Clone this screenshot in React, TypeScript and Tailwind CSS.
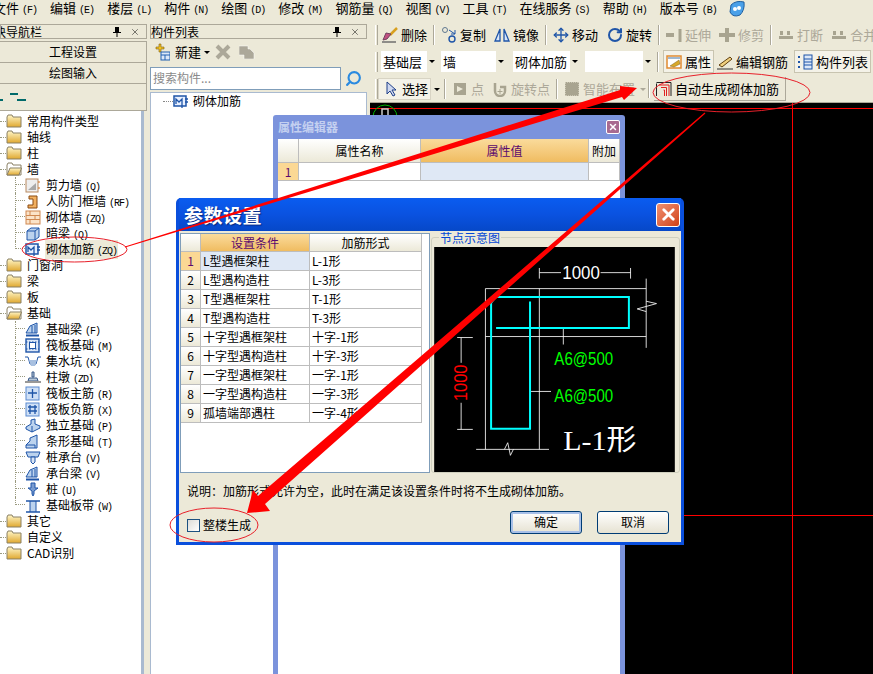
import React from "react";
import { Move, RotateCw, Search, X } from "lucide-react";

const CJK = '"Noto Sans CJK SC", "Noto Sans", sans-serif';

function Ltn({ children }: { children: React.ReactNode }) {
  return <span className="ml-[3px] font-['Liberation_Mono'] text-[10px] tracking-[-1px]">{children}</span>;
}

function MenuItem({ t, k }: { t: string; k: string }) {
  return (
    <span className="whitespace-nowrap">
      {t}
      <Ltn>({k})</Ltn>
    </span>
  );
}

function Folder({ open }: { open?: boolean }) {
  return (
    <svg width="16" height="14" viewBox="0 0 16 14" className="shrink-0">
      <defs>
        <linearGradient id="fg" x1="0" y1="0" x2="0" y2="1">
          <stop offset="0" stopColor="#fff6c8" />
          <stop offset="1" stopColor="#e0a830" />
        </linearGradient>
      </defs>
      <path d="M1 3 L2 1 H6 L7 3 H15 V13 H1 Z" fill={open ? "#fff" : "url(#fg)"} stroke="#8a8064" />
      {open && <path d="M1 13 L4 6 H15.5 L13 13 Z" fill="url(#fg)" stroke="#8a8064" />}
    </svg>
  );
}

function TreeIcon({ k }: { k: string }) {
  const blue = "#1f55a8";
  const c = { width: 16, height: 15, viewBox: "0 0 16 15", className: "shrink-0" };
  switch (k) {
    case "shear":
      return (
        <svg {...c}>
          <rect x="1" y="1" width="12" height="13" fill="#eee" stroke="#b98a60" />
          <path d="M3 12 L11 12 L11 5 Z" fill="#a9a9a9" />
          <path d="M13 4 h2 M13 10 h2" stroke="#d07020" />
        </svg>
      );
    case "door":
      return (
        <svg {...c}>
          <path d="M4 2 H12 V14 H3 V11 H8 V5 H4 Z" fill="#f2b060" stroke="#8a4a10" />
        </svg>
      );
    case "brick":
      return (
        <svg {...c}>
          <rect x="1" y="1" width="14" height="13" fill="#fbe3c8" stroke="#d08850" />
          <path d="M1 5.5 H15 M1 9.5 H15 M5 1 V5.5 M10 5.5 V9.5 M5 9.5 V14" stroke="#d08850" />
        </svg>
      );
    case "beam":
      return (
        <svg {...c}>
          <path d="M2 5 L6 2 H14 V11 L10 14 H2 Z" fill="#bcd3ee" stroke={blue} />
          <path d="M2 5 H10 V14 M10 5 L14 2" fill="none" stroke={blue} />
        </svg>
      );
    case "rebar":
      return (
        <svg {...c}>
          <rect x="1" y="2" width="12" height="10" fill="#e8f0ff" stroke={blue} strokeWidth="1.5" />
          <path d="M3 10 V5 L6 8 L9 5 V14 M12 5 H15 M12 8 H15" fill="none" stroke={blue} strokeWidth="1.3" />
        </svg>
      );
    case "footing":
      return (
        <svg {...c}>
          <path d="M1 11 L5 4 L12 1 V11 Z" fill="#bcd3ee" stroke={blue} />
          <path d="M7 4 V11 M10 3 V11" stroke={blue} />
          <path d="M1 13.5 H14" stroke={blue} strokeWidth="2" />
        </svg>
      );
    case "raft":
      return (
        <svg {...c}>
          <rect x="1" y="1" width="13" height="13" fill="#dce8f8" stroke={blue} strokeWidth="1.4" />
          <rect x="4.5" y="4.5" width="6" height="6" fill="#fff" stroke={blue} />
          <path d="M1 4 H14 M1 11 H14" stroke={blue} strokeDasharray="1.5 1.5" />
        </svg>
      );
    case "pit":
      return (
        <svg {...c}>
          <path d="M0 3 H3 L5 10 H11 L13 3 H16" fill="none" stroke={blue} />
          <path d="M4 6 H12 L10 12 H6 Z" fill="#a8c0e0" />
        </svg>
      );
    case "pier":
      return (
        <svg {...c}>
          <path d="M7 2 H9 V7 H7 Z M4 8 H12 L13 11 H3 Z" fill="#b8c8d8" stroke="#3a5a8a" />
          <rect x="0" y="11" width="16" height="2" fill="#999" />
        </svg>
      );
    case "main":
    case "neg":
      return (
        <svg {...c}>
          <rect x="1" y="1" width="13" height="13" fill="#cfe0f6" stroke="#5a8ad0" />
          <path d={k === "main" ? "M7.5 3 V12 M3 7 H12" : "M3 5 H12 M3 9 H12 M5 3 V12 M10 3 V12"} stroke={blue} strokeWidth="1.3" />
        </svg>
      );
    case "iso":
      return (
        <svg {...c}>
          <path d="M1 9 L6 6 V2 L10 1 V6 L15 8 V10 L7 14 L1 11 Z" fill="#bcd3ee" stroke={blue} />
          <path d="M7 8 V14" stroke={blue} />
        </svg>
      );
    case "strip":
      return (
        <svg {...c}>
          <path d="M1 14 V11 L5 7 V4 L12 1 V14 Z" fill="#bcd3ee" stroke={blue} />
          <path d="M1 11 H10 V14" fill="none" stroke={blue} />
        </svg>
      );
    case "cap":
      return (
        <svg {...c}>
          <path d="M1 2 H15 L13 7 H3 Z" fill="#bcd3ee" stroke={blue} />
          <path d="M6 7 H10 V12 L8 14 L6 12 Z" fill="#d8e4f4" stroke={blue} />
        </svg>
      );
    case "pile":
      return (
        <svg {...c}>
          <path d="M6 1 H10 V6 H13 L9 9 V12 L8 14 L7 12 V9 L3 6 H6 Z" fill="#7a9cd0" stroke={blue} />
        </svg>
      );
    default:
      return (
        <svg {...c}>
          <rect x="5" y="3" width="6" height="11" fill="#bcd3ee" />
          <path d="M1 3 H15 M1 14 H15" stroke={blue} strokeWidth="1.5" />
          <path d="M5 3 V14 M11 3 V14" stroke={blue} />
        </svg>
      );
  }
}

function Root({ t, open }: { t: React.ReactNode; open?: boolean }) {
  return (
    <div className="flex h-4 items-center">
      <span className="w-[6px] border-t border-dotted border-[#9a9a80]" />
      <Folder open={open} />
      <span className="ml-[5px] whitespace-nowrap">{t}</span>
    </div>
  );
}

function Child({ icon, t, k, last, sel }: { icon: string; t: string; k?: string; last?: boolean; sel?: boolean }) {
  return (
    <div className="flex h-4 items-center">
      <span className={last ? "ml-[15px] h-full w-[10px]" : "ml-[15px] h-full w-[10px] border-l border-dotted border-[#9a9a80]"}>
        <span className={last ? "block h-1/2 border-b border-l border-dotted border-[#9a9a80]" : "block h-1/2 border-b border-dotted border-[#9a9a80]"} />
      </span>
      <TreeIcon k={icon} />
      <span className={sel ? "ml-[4px] whitespace-nowrap bg-[#ece9d8] px-[1px]" : "ml-[4px] whitespace-nowrap px-[1px]"}>
        {t}
        {k && <Ltn>{k}</Ltn>}
      </span>
    </div>
  );
}

function PanelTitle({ t, clip }: { t: string; clip?: boolean }) {
  return (
    <div className="flex h-[15px] items-center justify-between overflow-hidden border border-[#aca899] bg-[#ece9d8] pr-[6px] text-[12px] leading-[13px]">
      <span className={clip ? "-ml-[19px] whitespace-nowrap" : "whitespace-nowrap"}>{t}</span>
      <span className="flex items-center gap-[8px]">
        <svg width="10" height="10" viewBox="0 0 10 10">
          <path d="M3 0 H7 V5 H9 V6 H5.5 V10 H4.5 V6 H1 V5 H3 Z" fill="#000" />
        </svg>
        <X size={10} strokeWidth={1.2} />
      </span>
    </div>
  );
}

function Grip() {
  return <span className="mx-[2px] h-[20px] w-[3px] shrink-0 border-x border-l-white border-r-[#aca899]" />;
}

function Sep() {
  return <span className="mx-[4px] h-[20px] w-[2px] shrink-0 border-l border-r border-l-[#aca899] border-r-white" />;
}

function Ico({ k }: { k: string }) {
  const c = { width: 16, height: 16, viewBox: "0 0 16 16", className: "shrink-0" };
  switch (k) {
    case "del":
      return (
        <svg {...c}>
          <path d="M15 1 L8 8" stroke="#d8a020" strokeWidth="2.5" />
          <path d="M9 7 L5 12 L1 13 L4 6 Z" fill="#c05080" stroke="#704060" />
          <path d="M0 15 H14" stroke="#666" strokeWidth="1.4" />
        </svg>
      );
    case "copy":
      return (
        <svg {...c}>
          <circle cx="4" cy="3" r="2.5" fill="none" stroke="#607890" />
          <circle cx="11" cy="12" r="3" fill="none" stroke="#1f55a8" strokeWidth="1.4" />
          <path d="M8 3 L14 7 M14 3 V7 H10" fill="none" stroke="#1f55a8" />
        </svg>
      );
    case "mirror":
      return (
        <svg {...c}>
          <path d="M6 2 L1 14 H6 Z M10 2 L15 14 H10 Z" fill="#d8e6f8" stroke="#1f55a8" strokeWidth="1.3" />
        </svg>
      );
    case "ext":
      return (
        <svg {...c}>
          <rect x="0" y="6" width="8" height="4" fill="#a8a490" />
          <path d="M14 2 V15" stroke="#a8a490" strokeWidth="3" />
        </svg>
      );
    case "trim":
      return (
        <svg {...c}>
          <rect x="0" y="6" width="16" height="4" fill="#a8a490" />
          <path d="M8 1 V15" stroke="#a8a490" strokeWidth="4" />
        </svg>
      );
    case "brk":
      return (
        <svg {...c}>
          <path d="M1 9 H15 V12 H1 Z M2 4 H5 V8 H2 Z M9 4 H12 V8 H9 Z" fill="#a8a490" />
        </svg>
      );
    case "prop":
      return (
        <svg {...c}>
          <rect x="1" y="2" width="14" height="12" fill="#fff" stroke="#e08a30" strokeWidth="1.5" />
          <path d="M2 3 H14 V5 H2 Z" fill="#a0b8d0" />
          <path d="M4 12 L13 6 L14 10 L8 13 Z" fill="#d8a828" stroke="#806020" strokeWidth=".5" />
        </svg>
      );
    case "edit":
      return (
        <svg {...c}>
          <path d="M2 11 L13 3 L15 5 L5 13 Z" fill="#f0d080" stroke="#604010" />
          <path d="M0 15 H16" stroke="#333" />
        </svg>
      );
    case "list":
      return (
        <svg {...c}>
          <path d="M1 3 H4 M1 8 H4 M1 13 H4" stroke="#1f55a8" strokeWidth="2" strokeDasharray="2 1" />
          <rect x="7" y="1" width="8" height="14" fill="#dce8f8" stroke="#1f55a8" />
          <path d="M7 5 H15 M7 8 H15 M7 11 H15" stroke="#1f55a8" />
        </svg>
      );
    case "sel":
      return (
        <svg {...c}>
          <path d="M4 1 V13 L7 10 L10 15 L12 14 L9 9 H13 Z" fill="#cfd8f0" stroke="#1f3f88" />
        </svg>
      );
    case "pt":
      return (
        <svg {...c}>
          <rect x="2" y="2" width="12" height="12" fill="#a8a490" />
          <path d="M5 5 L11 8 L5 11 Z" fill="#ece9d8" />
        </svg>
      );
    case "rpt":
      return (
        <svg {...c}>
          <path d="M3 2 V10 A5 5 0 0 0 13 10 V6 H8" fill="none" stroke="#a8a490" strokeWidth="2.5" />
          <path d="M8 8 V13 M5.5 10.5 H10.5" stroke="#a8a490" />
        </svg>
      );
    case "smart":
      return (
        <svg {...c}>
          <rect x="1" y="1" width="14" height="14" fill="#a8a490" stroke="#ece9d8" strokeDasharray="1 1" />
        </svg>
      );
    default:
      return (
        <svg {...c}>
          <path d="M0.5 2.5 V15 M0.5 1.5 H15" fill="none" stroke="#222" />
          <path d="M15 1.5 V15" fill="none" stroke="#222" />
          <path d="M3 4 H13 V15 M5 6.5 H10.5 V15 M7.5 9 H8.5 V15" fill="none" stroke="#e02020" />
        </svg>
      );
  }
}

function Tb({ icon, t, dim }: { icon: React.ReactNode; t: string; dim?: boolean }) {
  return (
    <span className={dim ? "flex items-center gap-[3px] whitespace-nowrap px-[2px] leading-[18px] text-[#aca899]" : "flex items-center gap-[3px] whitespace-nowrap px-[2px] leading-[18px]"}>
      {icon}
      {t}
    </span>
  );
}

function Caret({ dim }: { dim?: boolean }) {
  return <span className={dim ? "ml-[3px] h-0 w-0 border-x-[3px] border-t-[3px] border-x-transparent border-t-[#aca899]" : "ml-[3px] h-0 w-0 border-x-[3px] border-t-[3px] border-x-transparent border-t-black"} />;
}

function Combo({ t, w }: { t: string; w: string }) {
  return (
    <span className={`flex h-[21px] items-center bg-white ${w}`}>
      <span className="flex-1 whitespace-nowrap pl-[2px] leading-[18px]">{t}</span>
      <span className="flex h-full w-[10px] items-center justify-center bg-[#ece9d8]">
        <span className="h-0 w-0 border-x-[3px] border-t-[3px] border-x-transparent border-t-black" />
      </span>
    </span>
  );
}

function GridHead({ t, on, cls }: { t: string; on?: boolean; cls?: string }) {
  return (
    <div
      className={
        (on
          ? "bg-gradient-to-b from-[#fadb9b] to-[#f0bc60] text-[#5a0a6e] "
          : "bg-gradient-to-b from-white to-[#ece9d8] text-black ") +
        "flex items-center justify-center border-r border-b border-[#bdbdbd] text-[12px] " +
        (cls ?? "")
      }
    >
      {t}
    </div>
  );
}

const rows = [
  ["L型遇框架柱", "L-1形"],
  ["L型遇构造柱", "L-3形"],
  ["T型遇框架柱", "T-1形"],
  ["T型遇构造柱", "T-3形"],
  ["十字型遇框架柱", "十字-1形"],
  ["十字型遇构造柱", "十字-3形"],
  ["一字型遇框架柱", "一字-1形"],
  ["一字型遇构造柱", "一字-3形"],
  ["孤墙端部遇柱", "一字-4形"],
];

function Diagram() {
  return (
    <svg viewBox="27 152 723 676" width="241" height="225" className="block">
      <rect x="27" y="152" width="723" height="676" fill="#000" />
      <g stroke="#fff" strokeWidth="2.5" fill="none">
        <path d="M181 277 H664 M181 421 H664 M181 277 V760 M343 277 V760 M664 247 V455 M153 760 H372" />
        <path d="M343 229 H408 M527 229 H617 M343 215 V247 M617 215 V247" />
        <path d="M108 424 V500 M108 620 V700 M96 424 H143 M96 700 H143" />
        <path d="M664 315 L695 322 L637 338 L664 346" />
        <path d="M238 760 L248 740 L256 778 L265 760" />
        <path d="M415 395 V445 M318 586 H378" />
      </g>
      <path d="M213 395 H612 V302 H212 L198 320 V698 H315 V316" fill="none" stroke="#00ffff" strokeWidth="6" />
      <text x="412" y="248" fill="#fff" fontSize="56" textLength="113" lengthAdjust="spacingAndGlyphs" fontFamily="Liberation Sans">1000</text>
      <text x="0" y="0" transform="translate(127 615) rotate(-90)" fill="#ff0000" fontSize="54" textLength="110" lengthAdjust="spacingAndGlyphs" fontFamily="Liberation Sans">1000</text>
      <text x="388" y="507" fill="#00ff00" fontSize="54" textLength="177" lengthAdjust="spacingAndGlyphs" fontFamily="Liberation Sans">A6@500</text>
      <text x="388" y="618" fill="#00ff00" fontSize="54" textLength="177" lengthAdjust="spacingAndGlyphs" fontFamily="Liberation Sans">A6@500</text>
      <text x="415" y="762" fill="#fff" fontSize="84" textLength="220" lengthAdjust="spacingAndGlyphs" fontFamily="Liberation Serif, Noto Sans CJK SC, serif">L-1形</text>
    </svg>
  );
}

function PropertyWindow() {
  return (
    <div className="absolute left-[273px] top-[115px] flex h-[559px] w-[352px] flex-col rounded-t-[3px] bg-[#7b93dc] px-[5px]">
      <div className="flex h-[24px] shrink-0 items-center justify-between">
        <span className="text-[12px] font-bold text-[#c4d0f0]">属性编辑器</span>
        <span className="flex h-[14px] w-[14px] items-center justify-center rounded-[2px] border border-white bg-[#a86a90]">
          <X size={10} strokeWidth={3.5} color="#fff" />
        </span>
      </div>
      <div className="flex-1 bg-white">
        <div className="grid h-[42px] grid-cols-[21px_122px_168px_31px] grid-rows-[24px_18px]">
          <GridHead t="" />
          <GridHead t="属性名称" />
          <GridHead t="属性值" on />
          <GridHead t="附加" />
          <div className="flex items-center justify-center border-r border-b border-[#bdbdbd] bg-[#fbd894] text-[12px] text-[#5a0a6e]">1</div>
          <div className="border-r border-b border-[#bdbdbd]" />
          <div className="border-r border-b border-[#bdbdbd] bg-[#dfe8f5]" />
          <div className="border-r border-b border-[#bdbdbd]" />
        </div>
      </div>
    </div>
  );
}

function ParamDialog() {
  return (
    <div className="absolute left-[176px] top-[198px] flex h-[347px] w-[508px] flex-col rounded-t-[5px] bg-[#0a4fdc] px-[3px] pb-[3px]">
      <div className="flex h-[33px] shrink-0 items-center justify-between bg-gradient-to-b from-[#0a5cf0] via-[#0a52e0] to-[#0648c8] pl-[5px] pr-[1px]">
        <span className="text-[19px] font-bold leading-none tracking-[0.5px] text-white [text-shadow:1px_1px_1px_#0a2a80]">参数设置</span>
        <span className="flex h-[24px] w-[24px] items-center justify-center rounded-[3px] border border-white bg-gradient-to-br from-[#f09070] to-[#d04010]">
          <X size={19} strokeWidth={3.5} color="#fff" />
        </span>
      </div>
      <div className="flex flex-1 flex-col bg-[#ece9d8] px-[1px]">
        <div className="flex h-[241px] gap-[1px] pt-[2px]">
          <div className="h-[240px] w-[250px] shrink-0 border border-[#7f9db9] bg-white text-[12px]">
            <div className="grid w-[241px] grid-cols-[20px_109px_112px] grid-rows-[18px_repeat(9,19px)]">
              <GridHead t="" />
              <GridHead t="设置条件" on />
              <GridHead t="加筋形式" />
              {rows.map((r, i) => (
                <React.Fragment key={i}>
                  <div className={i === 0 ? "flex items-center justify-center border-r border-b border-[#bdbdbd] bg-[#fbd894] text-[#5a0a6e]" : "flex items-center justify-center border-r border-b border-[#bdbdbd] bg-gradient-to-b from-white to-[#ece9d8]"}>
                    {i + 1}
                  </div>
                  <div className={i === 0 ? "flex items-center whitespace-nowrap border-r border-b border-[#bdbdbd] bg-[#dfe8f5] pl-[2px]" : "flex items-center whitespace-nowrap border-r border-b border-[#bdbdbd] pl-[2px]"}>{r[0]}</div>
                  <div className="flex items-center whitespace-nowrap border-r border-b border-[#bdbdbd] pl-[2px]">{r[1]}</div>
                </React.Fragment>
              ))}
            </div>
          </div>
          <div className="relative mt-[4px] h-[236px] w-[249px] rounded-[3px] border border-[#d0d0bf] p-[2px] pt-[9px]">
            <span className="absolute -top-[7px] left-[7px] bg-[#ece9d8] px-[1px] text-[12px] leading-[14px] text-[#0046d5]">节点示意图</span>
            <Diagram />
          </div>
        </div>
        <div className="ml-[7px] mt-[11px] whitespace-nowrap text-[12px] leading-[16px]">说明：加筋形式允许为空，此时在满足该设置条件时将不生成砌体加筋。</div>
        <div className="mt-[11px] flex h-[24px] items-center pl-[7px] text-[12px]">
          <span className="mt-[6px] h-[13px] w-[13px] border border-[#1c5180] bg-gradient-to-br from-[#dcdcd7] to-white" />
          <span className="ml-[3px] mt-[6px]">整楼生成</span>
          <span className="ml-[259px] flex h-[23px] w-[72px] items-center justify-center rounded-[3px] border border-[#003c74] bg-gradient-to-b from-white to-[#e6e2d2] shadow-[inset_0_0_0_2px_#a8c0e8]">确定</span>
          <span className="ml-[15px] flex h-[23px] w-[72px] items-center justify-center rounded-[3px] border border-[#003c74] bg-gradient-to-b from-white to-[#e6e2d2]">取消</span>
        </div>
      </div>
    </div>
  );
}

function Annotations() {
  return (
    <svg width="873" height="674" viewBox="0 0 873 674" className="pointer-events-none absolute left-0 top-0">
      <g fill="none" stroke="#e8202a" strokeWidth="1">
        <ellipse cx="74.5" cy="249.5" rx="52.5" ry="12.5" />
        <ellipse cx="731.5" cy="92.5" rx="78.5" ry="19.5" />
        <ellipse cx="214" cy="525" rx="44" ry="17" />
      </g>
      <polygon fill="#ff0000" points="125,246.6 620,90 620,86 637,88 624,100 622,97 125,247.6" />
      <polygon fill="#ff0000" points="704.6,112.6 258,496 253,490 247,513 270,511 265,504 705.4,113.4" />
    </svg>
  );
}

const L0 = ["常用构件类型", "轴线", "柱"];

export default function App() {
  return (
    <div className="relative h-[674px] w-[873px] overflow-hidden bg-[#ece9d8] text-[13px] text-black" style={{ fontFamily: CJK }}>
      <div className="flex h-[22px] items-start gap-[11px] whitespace-nowrap leading-[16px]">
        <span className="-ml-[7px] flex gap-[13px]">
          <MenuItem t="文件" k="F" />
          <MenuItem t="编辑" k="E" />
          <MenuItem t="楼层" k="L" />
          <MenuItem t="构件" k="N" />
          <MenuItem t="绘图" k="D" />
          <MenuItem t="修改" k="M" />
          <MenuItem t="钢筋量" k="Q" />
          <MenuItem t="视图" k="V" />
          <MenuItem t="工具" k="T" />
          <MenuItem t="在线服务" k="S" />
          <MenuItem t="帮助" k="H" />
          <MenuItem t="版本号" k="B" />
        </span>
        <svg width="18" height="18" viewBox="0 0 18 18">
          <path d="M3 5 Q8 0 16 2 Q17 10 12 15 Q5 18 2 12 Z" fill="#4aa0e8" stroke="#2060a0" />
          <circle cx="7" cy="9" r="2" fill="#fff" />
          <circle cx="11" cy="8" r="2" fill="#fff" />
        </svg>
      </div>

      <div className="mt-[2px] flex h-[650px]">
        {/* left navigation */}
        <div className="flex w-[147px] shrink-0 flex-col">
          <PanelTitle t="模块导航栏" clip />
          <div className="mt-[2px] flex h-[22px] items-center justify-center border-y border-r border-[#aca899] text-[12px]">工程设置</div>
          <div className="flex h-[21px] items-center justify-center border-b border-r border-[#aca899] text-[12px]">绘图输入</div>
          <div className="flex h-[27px] items-center gap-[3px] border-b border-r border-[#aca899] pl-0">
            <span className="h-[2px] w-[3px] translate-y-[3px] bg-[#006a6a]" />
            <span className="flex flex-col gap-[4px] pl-[4px]">
              <span className="h-[2px] w-[8px] bg-[#006a6a]" />
              <span className="ml-[7px] h-[2px] w-[9px] bg-[#006a6a]" />
            </span>
          </div>
          <div className="mr-[3px] flex-1 overflow-hidden border-r-[3px] border-[#a9bad0] bg-white pt-[2px] text-[12px]">
            {L0.map((t) => (
              <Root key={t} t={t} />
            ))}
            <Root t="墙" open />
            <Child icon="shear" t="剪力墙" k="(Q)" />
            <Child icon="door" t="人防门框墙" k="(RF)" />
            <Child icon="brick" t="砌体墙" k="(ZQ)" />
            <Child icon="beam" t="暗梁" k="(Q)" />
            <Child icon="rebar" t="砌体加筋" k="(ZQ)" last sel />
            <Root t="门窗洞" />
            <Root t="梁" />
            <Root t="板" />
            <Root t="基础" open />
            <Child icon="footing" t="基础梁" k="(F)" />
            <Child icon="raft" t="筏板基础" k="(M)" />
            <Child icon="pit" t="集水坑" k="(K)" />
            <Child icon="pier" t="柱墩" k="(ZD)" />
            <Child icon="main" t="筏板主筋" k="(R)" />
            <Child icon="neg" t="筏板负筋" k="(X)" />
            <Child icon="iso" t="独立基础" k="(P)" />
            <Child icon="strip" t="条形基础" k="(T)" />
            <Child icon="cap" t="桩承台" k="(V)" />
            <Child icon="footing" t="承台梁" k="(V)" />
            <Child icon="pile" t="桩" k="(U)" />
            <Child icon="band" t="基础板带" k="(W)" last />
            <Root t="其它" />
            <Root t="自定义" />
            <Root t="CAD识别" />
          </div>
        </div>

        {/* component list */}
        <div className="ml-[3px] flex w-[217px] shrink-0 flex-col">
          <PanelTitle t="构件列表" />
          <div className="mt-[2px] flex h-[25px] items-center gap-[5px] pb-[3px] pl-[4px]">
            <svg width="16" height="18" viewBox="0 0 16 18">
              <path d="M2 4 H5 V1 H7 V4 H10 V6 H7 V9 H5 V6 H2 Z" fill="#f0c020" stroke="#806010" strokeWidth=".6" />
              <rect x="7" y="9" width="9" height="8" fill="#dce8f8" stroke="#2060b0" />
              <path d="M7 12 H16 M11 12 V17" stroke="#2060b0" />
            </svg>
            <span className="flex items-center">新建<Caret /></span>
            <svg width="16" height="16" viewBox="0 0 16 16">
              <path d="M2 2 L14 14 M14 2 L2 14" stroke="#aca899" strokeWidth="4" />
            </svg>
            <svg width="16" height="14" viewBox="0 0 16 14" className="ml-[3px]">
              <path d="M0 1 H9 V4 H11 L15 8 V14 H5 V10 H0 Z" fill="#aca899" stroke="#fff" strokeWidth=".5" />
            </svg>
          </div>
          <div className="flex h-[24px] items-center">
            <div className="flex h-[23px] w-[191px] items-center border border-[#7f9db9] bg-white pl-[2px] text-[12px] text-[#8a8a8a]">搜索构件...</div>
            <Search size={17} strokeWidth={3} color="#2a8ae0" className="ml-[4px] -scale-x-100" />
          </div>
          <div className="mt-[2px] flex-1 border-x border-t border-[#a9bad0] bg-white text-[12px]">
            <div className="flex h-[16px] items-center pl-[12px]">
              <span className="w-[10px] border-t border-dotted border-[#888]" />
              <TreeIcon k="rebar" />
              <span className="ml-[4px]">砌体加筋</span>
            </div>
          </div>
        </div>

        {/* drawing area */}
        <div className="ml-[3px] flex min-w-0 flex-1 flex-col">
          <div className="flex h-[22px] items-center overflow-hidden whitespace-nowrap pl-[3px]">
            <Grip />
            <Tb icon={<Ico k="del" />} t="删除" />
            <Sep />
            <Tb icon={<Ico k="copy" />} t="复制" />
            <span className="ml-[4px]"><Tb icon={<Ico k="mirror" />} t="镜像" /></span>
            <Sep />
            <Tb icon={<Move size={16} color="#1f55a8" strokeWidth={2} />} t="移动" />
            <span className="ml-[5px]"><Tb icon={<RotateCw size={16} color="#1f55a8" strokeWidth={3} />} t="旋转" /></span>
            <Sep />
            <Tb icon={<Ico k="ext" />} t="延伸" dim />
            <span className="ml-[4px]"><Tb icon={<Ico k="trim" />} t="修剪" dim /></span>
            <Sep />
            <Tb icon={<Ico k="brk" />} t="打断" dim />
            <span className="ml-[4px]"><Tb icon={<Ico k="brk" />} t="合并" dim /></span>
          </div>
          <div className="mt-[3px] flex h-[25px] items-center overflow-hidden whitespace-nowrap pl-[3px]">
            <Grip />
            <span className="ml-[1px] flex">
              <Combo t="基础层" w="w-[56px]" />
              <span className="ml-[4px]"><Combo t="墙" w="w-[65px]" /></span>
              <span className="ml-[7px]"><Combo t="砌体加筋" w="w-[67px]" /></span>
              <span className="ml-[5px]"><Combo t="" w="w-[68px]" /></span>
            </span>
            <Sep />
            <span className="flex h-[23px] items-center border border-[#c8c4b0] bg-[#f4f2e8]"><Tb icon={<Ico k="prop" />} t="属性" /></span>
            <span className="ml-[1px]"><Tb icon={<Ico k="edit" />} t="编辑钢筋" /></span>
            <span className="ml-[4px] flex h-[23px] items-center border border-[#c8c4b0] bg-[#f4f2e8]"><Tb icon={<Ico k="list" />} t="构件列表" /></span>
          </div>
          <div className="mt-[2px] flex h-[26px] items-center overflow-hidden whitespace-nowrap pl-[3px]">
            <Grip />
            <span className="-ml-[2px] flex h-[22px] items-center border border-[#d8d4c4] bg-[#f4f2e8] pl-[2px]">
              <Tb icon={<Ico k="sel" />} t="选择" />
            </span>
            <Caret />
            <Sep />
            <Tb icon={<Ico k="pt" />} t="点" dim />
            <span className="ml-[4px]"><Tb icon={<Ico k="rpt" />} t="旋转点" dim /></span>
            <Sep />
            <span className="flex items-center"><Tb icon={<Ico k="smart" />} t="智能布置" dim /><Caret dim /></span>
            <span className="-ml-[2px]"><Sep /></span>
            <span className="flex h-[24px] items-center border-r border-b border-[#aca899] pr-[4px]"><Tb icon={<Ico k="auto" />} t="自动生成砌体加筋" /></span>
          </div>
          <div className="relative flex-1 overflow-hidden border-t border-[#aca899] bg-black">
            <div className="absolute left-0 right-0 top-[5px] h-px bg-[#ff0000]" />
            <div className="absolute bottom-0 left-[422px] top-0 w-px bg-[#ff0000]" />
            <div className="absolute left-[300px] right-0 top-[412px] h-px bg-[#ff0000]" />
            <svg width="30" height="16" viewBox="0 0 30 16" className="absolute left-[1px] top-0">
              <path d="M2 14 A12 12 0 0 1 26 14" fill="none" stroke="#00b000" />
              <rect x="11" y="6" width="6" height="8" fill="none" stroke="#ccc" strokeWidth="1.5" />
            </svg>
          </div>
        </div>
      </div>

      <PropertyWindow />
      <ParamDialog />
      <Annotations />
    </div>
  );
}
